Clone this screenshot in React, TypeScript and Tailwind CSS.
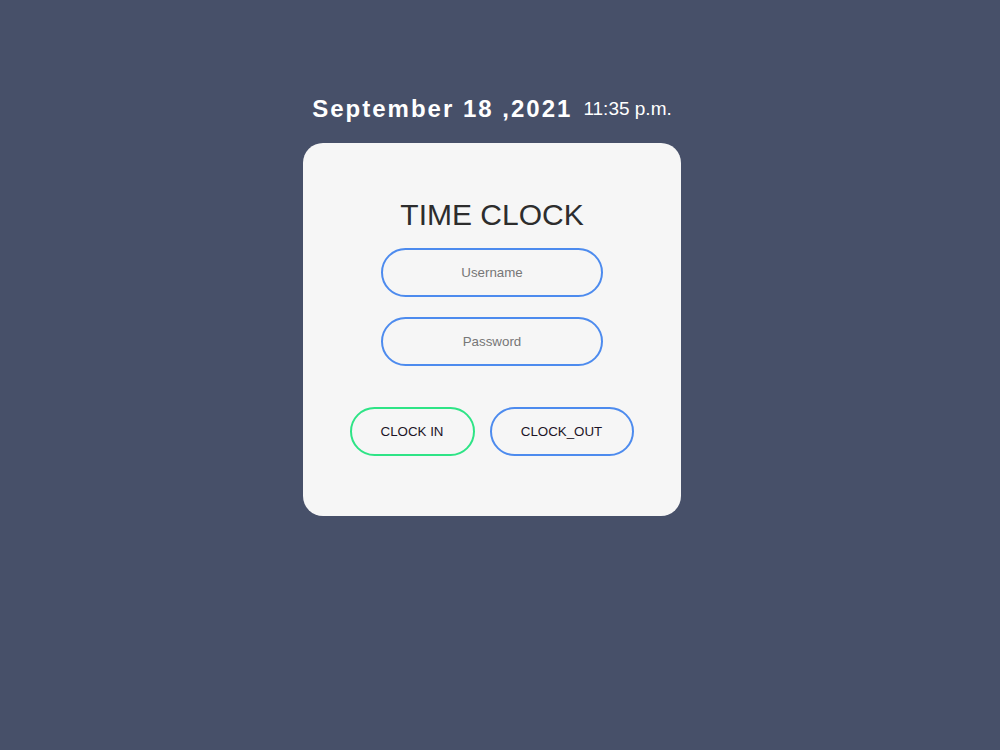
import React from "react";

export default function App() {
  return (
    <div
      className="min-h-[750px] w-full bg-[#475069] flex flex-col items-center pt-[93px] pr-[16px]"
      style={{ fontFamily: '"Liberation Sans", Arial, sans-serif' }}
    >
      <div className="flex items-center h-[32px] gap-[11px] text-white">
        <span className="text-[24px] font-bold tracking-[2px] leading-[32px]">September 18 ,2021</span>
        <span className="text-[19px] leading-[32px] -mt-[1px]">11:35 p.m.</span>
      </div>
      <div className="mt-[18px] w-[378px] h-[373px] rounded-[20px] bg-[#f6f6f6] flex flex-col items-center pt-[54px]">
        <h1 className="text-[30px] leading-[36px] text-[#2d2d2d]">TIME CLOCK</h1>
        <input
          placeholder="Username"
          className="mt-[15px] w-[222px] h-[49px] rounded-full border-2 border-[#4d8bee] bg-transparent text-center text-[13.33px] text-[#333] placeholder:text-[#777] outline-none"
        />
        <input
          type="password"
          placeholder="Password"
          className="mt-[20px] w-[222px] h-[49px] rounded-full border-2 border-[#4d8bee] bg-transparent text-center text-[13.33px] text-[#333] placeholder:text-[#777] outline-none"
        />
        <div className="mt-[41px] flex gap-[15px] ml-[-1px]">
          <button className="w-[125px] h-[49px] rounded-full border-2 border-[#2ee486] bg-transparent text-[13.33px] text-[#1c1426]">
            CLOCK IN
          </button>
          <button className="w-[144px] h-[49px] rounded-full border-2 border-[#4d8bee] bg-transparent text-[13.33px] text-[#1c1426]">
            CLOCK_OUT
          </button>
        </div>
      </div>
    </div>
  );
}
